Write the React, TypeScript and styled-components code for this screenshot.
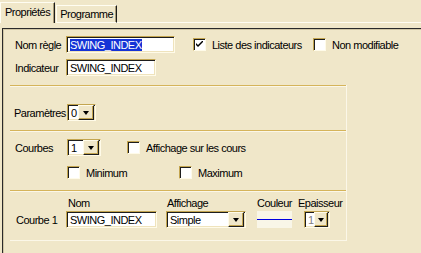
import React from 'react';
import styled, { createGlobalStyle } from 'styled-components';

const GlobalStyle = createGlobalStyle`
  html, body {
    margin: 0;
    padding: 0;
    background: #f0e7c9;
  }
  * {
    box-sizing: border-box;
  }
`;

const Window = styled.div`
  width: 421px;
  height: 253px;
  overflow: hidden;
  background: #f0e7c9;
  font-family: 'Liberation Sans', Arial, sans-serif;
  font-size: 11px;
  letter-spacing: -0.5px;
  color: #000;
  display: flex;
  flex-direction: column;
`;

const TabStrip = styled.div`
  display: flex;
  align-items: flex-end;
  height: 23px;
  padding-top: 2px;
`;

const Tab = styled.div<{ $active?: boolean }>`
  height: ${({ $active }) => ($active ? '21px' : '18px')};
  padding: ${({ $active }) => ($active ? '3px 4px 0 4px' : '2px 3px 0 3px')};
  margin-left: ${({ $active }) => ($active ? '0' : '1px')};
  border-top: 1px solid #fffdf2;
  border-left: 1px solid #fffdf2;
  border-right: 1px solid #1c1c1c;
  box-shadow: inset -1px 0 0 #a89c78;
  border-bottom: ${({ $active }) => ($active ? 'none' : '1px solid #fffdf2')};
  white-space: nowrap;
`;

const TabRest = styled.div`
  flex: 1;
  border-bottom: 1px solid #fffdf2;
`;

const Frame = styled.div`
  flex: 1;
  margin: 5px 0 0 2px;
  border-top: 1px solid #2a2a2a;
  border-left: 1px solid #2a2a2a;
  box-shadow: inset 1px 1px 0 #cfc5a4;
  display: flex;
  flex-direction: column;
`;

const Head = styled.div`
  display: grid;
  grid-template-columns: 51px 127px 120px auto;
  grid-template-rows: 17px 17px;
  row-gap: 6px;
  align-items: center;
  padding: 7px 0 0 12px;
  height: 56px;
`;

const Label = styled.span`
  white-space: nowrap;
`;

const Groups = styled.div`
  margin-left: 7px;
  width: 337px;
  border-right: 1px solid #fbf7e8;
  border-bottom: 1px solid #fbf7e8;
  display: flex;
  flex-direction: column;
`;

const Group = styled.div<{ $h: number }>`
  height: ${({ $h }) => $h}px;
  border-top: 1px solid #d5b45a;
  box-shadow: inset 0 1px 0 #fbf7e8;
`;

const Field = styled.div<{ $w: number; $muted?: boolean }>`
  width: ${({ $w }) => $w}px;
  height: 17px;
  background: #fff;
  border: 1px solid;
  border-color: #c3a550 #fffbe9 #fffbe9 #c3a550;
  box-shadow: inset 1px 1px 0 #1d1d1d, inset -1px -1px 0 #efe3bc;
  display: flex;
  align-items: center;
  padding-left: 3px;
  color: ${({ $muted }) => ($muted ? '#808080' : '#000')};
  white-space: nowrap;
  overflow: hidden;
`;

const Selected = styled.span`
  background: #1533d6;
  color: #fff;
`;

const Drop = styled.div`
  margin-left: auto;
  width: 16px;
  height: 15px;
  margin-right: 1px;
  background: #f0e7c9;
  border: 1px solid;
  border-color: #fffbe9 #1d1d1d #1d1d1d #fffbe9;
  box-shadow: inset -1px -1px 0 #c3a550;
  display: flex;
  align-items: center;
  justify-content: center;

  &::after {
    content: '';
    border-left: 3.5px solid transparent;
    border-right: 3.5px solid transparent;
    border-top: 4px solid #000;
  }
`;

const Check = styled.div`
  width: 13px;
  height: 13px;
  background: #fff;
  border: 1px solid;
  border-color: #c3a550 #fffbe9 #fffbe9 #c3a550;
  box-shadow: inset 1px 1px 0 #1d1d1d;
  margin-right: 6px;
  flex: none;
  display: flex;
  align-items: center;
  justify-content: center;
`;

const CheckItem = styled.div`
  display: flex;
  align-items: center;
  white-space: nowrap;
`;

const Tick = () => (
  <svg width="7" height="7" viewBox="0 0 7 7">
    <path d="M0 2 L0 4 L2 6 L7 1 L7 -1 L2 4 Z" fill="#000" />
  </svg>
);

const Select = ({ w, value, muted }: { w: number; value: string; muted?: boolean }) => (
  <Field $w={w} $muted={muted}>
    <span>{value}</span>
    <Drop />
  </Field>
);

const ParamRow = styled.div`
  display: grid;
  grid-template-columns: 53px auto;
  grid-template-rows: 17px;
  align-items: center;
  padding: 18px 0 0 4px;
`;

const CurvesBody = styled.div`
  display: grid;
  grid-template-columns: 52px 60px auto;
  grid-template-rows: 17px 17px;
  row-gap: 8px;
  align-items: center;
  padding: 8px 0 0 5px;
`;

const CourbeGrid = styled.div`
  display: grid;
  grid-template-columns: 50px 100px 91px 41px auto;
  grid-template-rows: 14px 17px;
  row-gap: 1px;
  align-items: end;
  padding: 5px 0 0 6px;
`;

const ColHead = styled.span<{ $shift?: number }>`
  padding-left: ${({ $shift }) => $shift ?? 2}px;
  white-space: nowrap;
  align-self: center;
`;

const RowLabel = styled(Label)`
  align-self: center;
`;

const Swatch = styled.div`
  width: 35px;
  height: 17px;
  background: #f9f6e8;
  display: flex;
  align-items: center;

  &::after {
    content: '';
    width: 100%;
    height: 1px;
    background: #0000e0;
  }
`;

const Indent = styled.div<{ $l: number }>`
  padding-left: ${({ $l }) => $l}px;
`;

export default function App() {
  return (
    <>
      <GlobalStyle />
      <Window>
        <TabStrip>
          <Tab $active>Propriétés</Tab>
          <Tab>Programme</Tab>
          <TabRest />
        </TabStrip>
        <Frame>
          <Head>
            <Label>Nom règle</Label>
            <Field $w={109}>
              <Selected>SWING_INDEX</Selected>
            </Field>
            <CheckItem>
              <Check>
                <Tick />
              </Check>
              Liste des indicateurs
            </CheckItem>
            <CheckItem>
              <Check />
              Non modifiable
            </CheckItem>
            <Label>Indicateur</Label>
            <Field $w={90}>SWING_INDEX</Field>
          </Head>
          <Groups>
            <Group $h={45}>
              <ParamRow>
                <Label>Paramètres</Label>
                <Select w={29} value="0" />
              </ParamRow>
            </Group>
            <Group $h={60}>
              <CurvesBody>
                <Label>Courbes</Label>
                <Select w={34} value="1" />
                <CheckItem>
                  <Check />
                  Affichage sur les cours
                </CheckItem>
                <span />
                <CheckItem>
                  <Check />
                  Minimum
                </CheckItem>
                <Indent $l={52}>
                  <CheckItem>
                    <Check />
                    Maximum
                  </CheckItem>
                </Indent>
              </CurvesBody>
            </Group>
            <Group $h={50}>
              <CourbeGrid>
                <span />
                <ColHead>Nom</ColHead>
                <ColHead $shift={1}>Affichage</ColHead>
                <ColHead $shift={0}>Couleur</ColHead>
                <ColHead $shift={0}>Epaisseur</ColHead>
                <RowLabel>Courbe 1</RowLabel>
                <Field $w={91}>SWING_INDEX</Field>
                <Select w={80} value="Simple" />
                <Swatch />
                <Indent $l={6}>
                  <Select w={26} value="1" muted />
                </Indent>
              </CourbeGrid>
            </Group>
          </Groups>
        </Frame>
      </Window>
    </>
  );
}
